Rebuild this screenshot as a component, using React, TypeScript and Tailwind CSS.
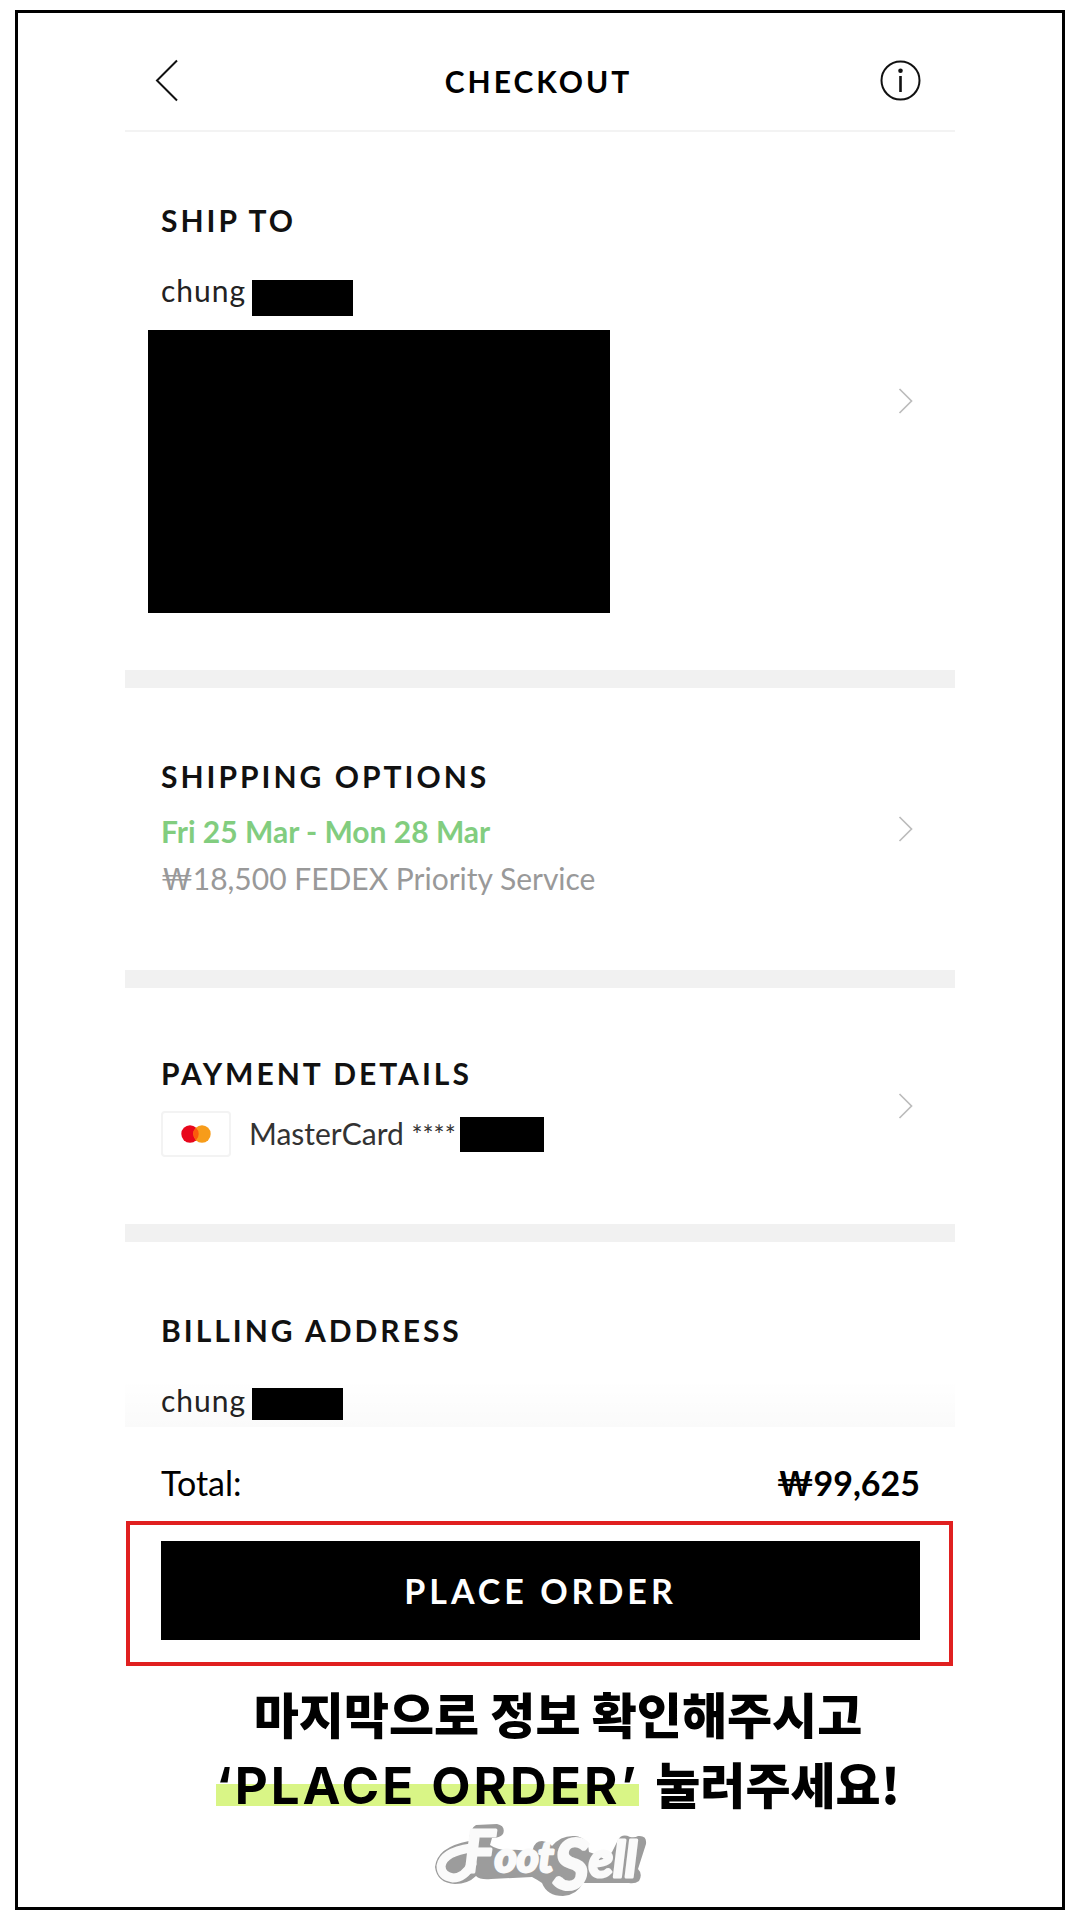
import { ReactNode } from "react";
import { clsx } from "clsx";

interface ISectionProps {
  title: string;
  label?: string;
  className?: string;
  children: ReactNode;
}

const ChevronRight = () => (
  <svg width="15" height="26" viewBox="0 0 15 26" fill="none" aria-hidden="true">
    <path d="M1.5 1L13.5 13L1.5 25" stroke="#bcbcbc" strokeWidth="1.7" />
  </svg>
);

const Redacted = ({ className }: { className: string }) => (
  <span className={clsx("block shrink-0 bg-black", className)} />
);

const Section = ({ title, label, className, children }: ISectionProps) => (
  <section className="flex items-center justify-between pl-9 pr-[42px]">
    <div className={clsx("min-w-0", className)}>
      <h2 className="text-[30px] leading-9 font-bold tracking-[3px] text-[#111]">
        {title}
      </h2>
      {children}
    </div>
    {label && (
      <button type="button" aria-label={label} className="shrink-0">
        <ChevronRight />
      </button>
    )}
  </section>
);

const Divider = () => <div className="h-[18px] bg-[#f1f1f1]" />;

const MasterCardBadge = () => (
  <span className="flex h-[46px] w-[70px] items-center justify-center rounded-[4px] border-2 border-[#f3f3f3]">
    <svg width="30" height="18" viewBox="0 0 30 18" aria-hidden="true">
      <circle cx="9" cy="9" r="8.7" fill="#e8071c" />
      <circle cx="21" cy="9" r="8.7" fill="#f79c1a" />
      <path d="M15 2.7a8.7 8.7 0 0 1 0 12.6a8.7 8.7 0 0 1 0-12.6z" fill="#fb5b0c" />
    </svg>
  </span>
);

const FootSellLogo = () => (
  <svg
    width="214"
    height="94"
    viewBox="0 -12 214 94"
    role="img"
    aria-label="FootSell"
    fontFamily="Lato, sans-serif"
    fontStyle="italic"
    fontWeight="700"
    strokeLinejoin="round"
    strokeLinecap="round"
  >
    {/* grey badge behind the wordmark */}
    <path
      d="M43 1L64 0Q73 2 70 10Q67 14 59 14L57 21Q66 27 77 26Q88 25 93 28L100 25Q102 17 109 17Q116 18 119 22Q128 11 142 12Q155 13 156 28Q164 30 171 35Q176 32 179 28L185 16Q189 9 197 13Q202 14 205 12Q214 11 213 20L205 45Q210 50 206 57Q202 60 196 59L150 59Q144 71 130 72Q114 72 109 59Q103 55 99 53L58 55Q47 56 43 52Q35 60 22 60Q4 59 2 43Q4 23 36 17Q37 4 43 1Z"
      fill="#9c9c9c"
    />
    {/* swash */}
    <path
      d="M39 40Q31 54 20 54Q8 52 8 42Q10 28 38 24"
      fill="none"
      stroke="#fafafa"
      strokeWidth="9"
    />
    <text
      x="31"
      y="48"
      fontSize="42"
      fill="#fafafa"
      stroke="#fafafa"
      strokeWidth="3"
    >
      <tspan fontSize="58">F</tspan>
      <tspan>oot</tspan>
      <tspan dy="17" fontSize="68">S</tspan>
      <tspan dy="-12" fontSize="50">ell</tspan>
    </text>
  </svg>
);

const App = () => {
  return (
    <div className="min-h-screen bg-white px-[15px] py-[10px] font-[Lato,'Noto_Sans_CJK_KR',sans-serif] text-black">
      <div className="border-[3px] border-black pb-px">
        <main className="mx-auto w-full max-w-[830px]">
          <header className="flex items-center justify-between border-b-2 border-[#f3f3f3] pt-[46px] pb-7 pl-[30px] pr-[33px]">
            <button type="button" aria-label="Back" className="flex w-[43px]">
              <svg width="25" height="43" viewBox="0 0 25 43" fill="none" aria-hidden="true">
                <path d="M22 1.5L2 21.5L22 41.5" stroke="#111" strokeWidth="2" />
              </svg>
            </button>
            <h1 className="text-[30px] leading-9 font-bold tracking-[3px]">CHECKOUT</h1>
            <button type="button" aria-label="Information">
              <svg width="43" height="43" viewBox="0 0 43 43" fill="none" aria-hidden="true">
                <circle cx="21.5" cy="21.5" r="19" stroke="#111" strokeWidth="2" />
                <circle cx="21.5" cy="11.7" r="2.3" fill="#111" />
                <path d="M21.5 17V33" stroke="#111" strokeWidth="2.6" />
              </svg>
            </button>
          </header>

          {/* Shipping address */}
          <Section title="SHIP TO" label="Edit shipping address" className="pt-[70px] pb-[57px]">
            <div className="mt-[34px] flex items-start gap-[6px] text-[30px] leading-9 text-[#222]">
              <span className="tracking-[1px]">chung</span>
              <Redacted className="mt-2 h-9 w-[101px]" />
            </div>
            <Redacted className="mt-[14px] -ml-[13px] h-[283px] w-[462px]" />
          </Section>
          <Divider />

          <Section title="SHIPPING OPTIONS" label="Edit shipping options" className="pt-[70px] pb-[68px]">
            <p className="mt-[14px] text-[30px] leading-[47px] font-bold text-[#82cd7f]">
              Fri 25 Mar - Mon 28 Mar
            </p>
            <p className="text-[30px] leading-[47px] text-[#999]">
              ₩18,500 FEDEX Priority Service
            </p>
          </Section>
          <Divider />

          <Section title="PAYMENT DETAILS" label="Edit payment details" className="pt-[67px] pb-[67px]">
            <div className="mt-5 flex items-center text-[30px] leading-9 text-[#333]">
              <MasterCardBadge />
              <span className="ml-[18px]">
                MasterCard <span className="text-[26px]">****</span>
              </span>
              <Redacted className="ml-1 h-[35px] w-[84px]" />
            </div>
          </Section>
          <Divider />

          {/* Billing address, fading out under the total bar */}
          <div className="relative">
            <Section title="BILLING ADDRESS" className="pt-[70px] pb-[7px]">
              <div className="mt-[34px] flex items-start gap-[6px] text-[30px] leading-9 text-[#222]">
                <span className="tracking-[1px]">chung</span>
                <Redacted className="mt-[6px] h-8 w-[91px]" />
              </div>
            </Section>
            <div className="pointer-events-none absolute inset-x-0 bottom-0 h-12 bg-linear-to-t from-black/2 to-transparent" />
          </div>

          <div className="flex items-center justify-between pt-9 pb-[18px] pl-9 pr-[35px] text-[34px] leading-10">
            <span>Total:</span>
            <span className="font-bold">₩99,625</span>
          </div>

          <div className="ml-px mr-[2px] border-4 border-[#e02020] pt-4 pb-[22px] pl-[31px] pr-[29px]">
            <button
              type="button"
              className="h-[99px] w-full bg-black text-[34px] font-bold tracking-[4px] text-white"
            >
              PLACE ORDER
            </button>
          </div>

          <div className="mt-3 pl-9 text-center font-['Noto_Sans_CJK_KR',sans-serif] text-[49px] leading-[70px] font-black">
            <p>마지막으로 정보 확인해주시고</p>
            <p className="flex items-baseline justify-center gap-4">
              <span className="bg-[linear-gradient(transparent_47%,#d9f586_47%,#d9f586_78%,transparent_78%)] font-[Inter,sans-serif] text-[51px] font-bold tracking-[3px]">
                ‘PLACE ORDER’
              </span>
              <span>눌러주세요!</span>
            </p>
          </div>

          <div className="-mt-[9px] flex justify-center">
            <FootSellLogo />
          </div>
        </main>
      </div>
    </div>
  );
};

export default App;
